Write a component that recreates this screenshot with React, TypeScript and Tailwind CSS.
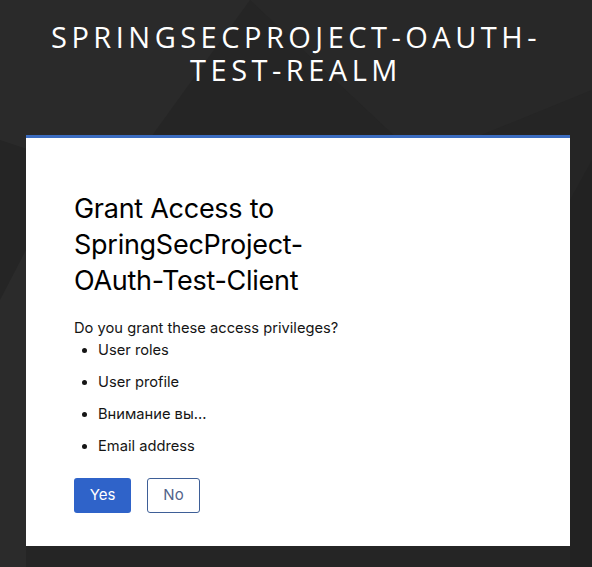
export default function App() {
    const scopes = ['User roles', 'User profile', 'Внимание вы...', 'Email address'];

    return (
        <div className="relative min-h-[567px] w-full overflow-hidden bg-[#252525] font-['Inter','Liberation_Sans',sans-serif]">
            <svg
                className="pointer-events-none absolute inset-0 h-full w-full"
                viewBox="0 0 592 567"
                preserveAspectRatio="none"
            >
                <polygon points="0,0 250,0 120,180 0,140" fill="#2a2a2a" />
                <polygon points="250,0 592,0 592,90 420,160" fill="#282828" />
                <polygon points="0,300 26,250 26,567 0,567" fill="#2b2b2b" />
                <polygon points="570,200 592,160 592,567 570,567" fill="#222222" />
                <polygon points="120,180 420,160 300,300" fill="#2d2d2d" />
            </svg>

            <div className="relative flex flex-col items-center">
                <h1 className="mt-[20px] text-center font-['Open_Sans',sans-serif] text-[29px] leading-[33px] tracking-[0.155em] text-white">
                    <span className="block">SPRINGSECPROJECT-OAUTH-</span>
                    <span className="block">TEST-REALM</span>
                </h1>

                <div className="ml-[26px] mt-[49px] w-[544px] self-start border-t-[3px] border-[#3b6cc0] bg-white px-[48px] pb-[33px] pt-[53px]">
                    <h2 className="w-[260px] font-['Inter',sans-serif] text-[27px] leading-[36px] font-normal tracking-[-0.01em] text-black">
                        Grant Access to SpringSecProject-OAuth-Test-Client
                    </h2>

                    <p className="mt-[18px] text-[14.7px] leading-[22px] text-[#151515]">
                        Do you grant these access privileges?
                    </p>
                    <ul className="ml-[24px] list-disc text-[14.7px] leading-[22px] text-[#151515]">
                        {scopes.map((scope) => (
                            <li key={scope} className="mb-[10px]">
                                {scope}
                            </li>
                        ))}
                    </ul>

                    <div className="mt-[21px] flex gap-[16px]">
                        <button className="h-[35px] w-[57px] rounded-[3px] bg-[#2f63c9] text-[15px] text-white">
                            Yes
                        </button>
                        <button className="h-[35px] w-[53px] rounded-[3px] border border-[#3e5f97] bg-white text-[15px] text-[#52638a]">
                            No
                        </button>
                    </div>
                </div>
            </div>
        </div>
    );
}
